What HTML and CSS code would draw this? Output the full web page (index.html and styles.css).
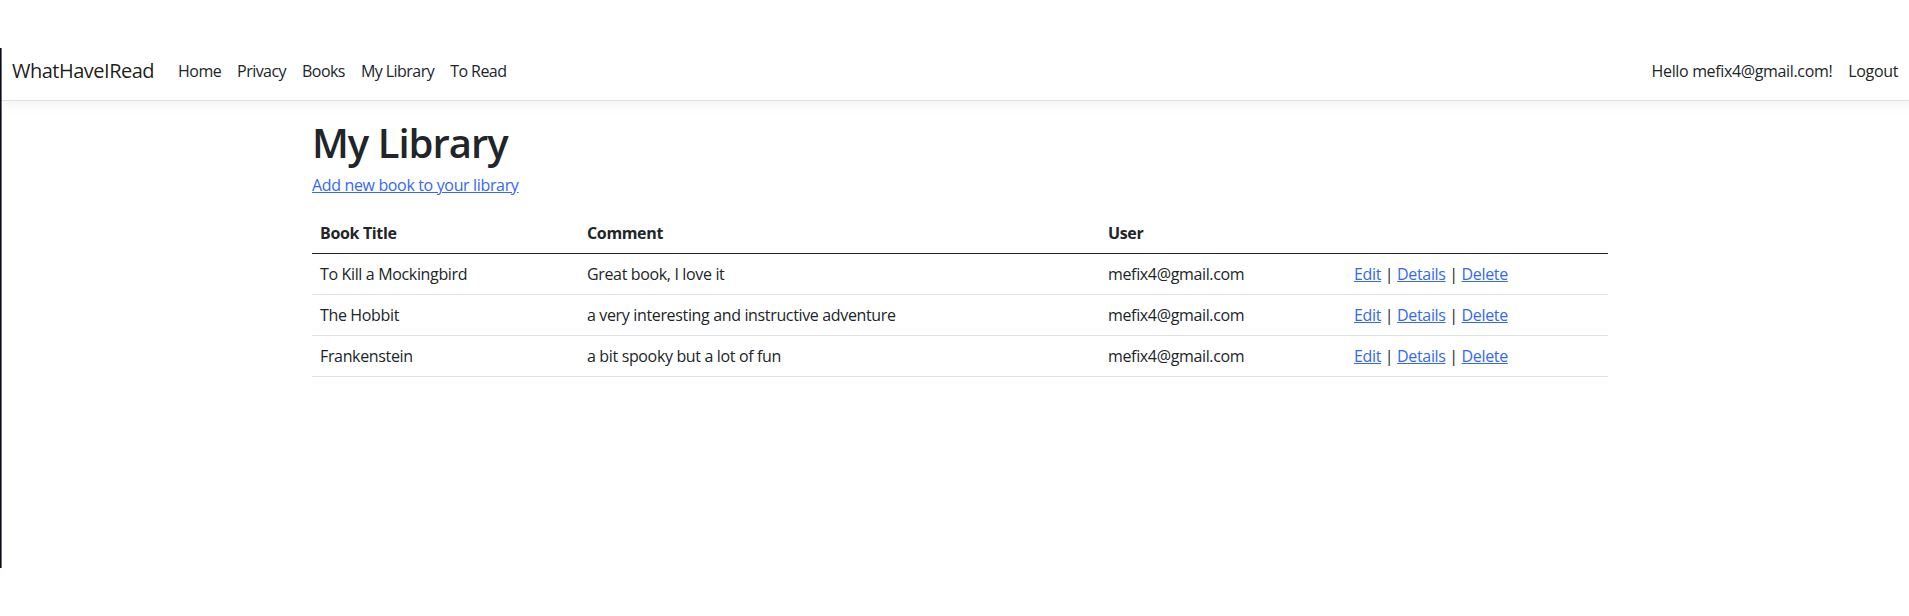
FILE: index.html
```html
<!DOCTYPE html>
<html lang="en">
<head>
<meta charset="utf-8">
<title>My Library - WhatHaveIRead</title>
<link rel="stylesheet" href="styles.css">
</head>
<body>
<div class="frame-edge"></div>
<div class="page">
  <header>
    <nav class="navbar">
      <div class="navbar-inner">
        <a class="brand" href="#">WhatHaveIRead</a>
        <ul class="nav nav-main">
          <li><a class="nav-link" href="#">Home</a></li>
          <li><a class="nav-link" href="#">Privacy</a></li>
          <li><a class="nav-link" href="#">Books</a></li>
          <li><a class="nav-link" href="#">My Library</a></li>
          <li><a class="nav-link" href="#">To Read</a></li>
        </ul>
        <ul class="nav nav-right">
          <li><a class="nav-link" href="#">Hello mefix4@gmail.com!</a></li>
          <li><a class="nav-link" href="#">Logout</a></li>
        </ul>
      </div>
    </nav>
  </header>
  <div class="container">
    <main>
      <h1>My Library</h1>
      <p class="create"><a href="#">Add new book to your library</a></p>
      <table class="table">
        <colgroup>
          <col class="c-title">
          <col class="c-comment">
          <col class="c-user">
          <col class="c-actions">
        </colgroup>
        <thead>
          <tr><th>Book Title</th><th>Comment</th><th>User</th><th></th></tr>
        </thead>
        <tbody>
          <tr>
            <td>To Kill a Mockingbird</td>
            <td>Great book, I love it</td>
            <td>mefix4@gmail.com</td>
            <td><a href="#">Edit</a> | <a href="#">Details</a> | <a href="#">Delete</a></td>
          </tr>
          <tr>
            <td>The Hobbit</td>
            <td>a very interesting and instructive adventure</td>
            <td>mefix4@gmail.com</td>
            <td><a href="#">Edit</a> | <a href="#">Details</a> | <a href="#">Delete</a></td>
          </tr>
          <tr>
            <td>Frankenstein</td>
            <td>a bit spooky but a lot of fun</td>
            <td>mefix4@gmail.com</td>
            <td><a href="#">Edit</a> | <a href="#">Details</a> | <a href="#">Delete</a></td>
          </tr>
        </tbody>
      </table>
    </main>
  </div>
</div>
</body>
</html>
```

FILE: styles.css
```css
html, body {
  margin: 0;
  padding: 0;
  overflow: hidden;
  background: #fff;
}

body {
  font-family: "Open Sans", "Noto Sans", "Liberation Sans", sans-serif;
  font-size: 16px;
  line-height: 1.5;
  letter-spacing: -0.35px;
  color: #212529;
  position: relative;
  height: 616px;
}

.frame-edge {
  position: absolute;
  left: 0;
  top: 48px;
  width: 2px;
  height: 520px;
  background: linear-gradient(to right, #0b0b1c 0, #0b0b1c 1px, #6a6a78 1px, #6a6a78 2px);
  z-index: 5;
}

.page {
  width: 1920px;
  padding-top: 44px;
}

.navbar {
  background: #fff;
  border-bottom: 1px solid #dee2e6;
  box-shadow: 0 6px 12px -2px rgba(0, 0, 0, 0.05);
  padding: 7px 0 9px;
  margin-bottom: 16px;
}

.navbar-inner {
  display: flex;
  align-items: center;
  padding: 0 14px 0 12px;
}

.brand {
  font-size: 20px;
  line-height: 30px;
  letter-spacing: -0.5px;
  padding: 5px 0;
  margin-right: 16px;
  color: rgba(0, 0, 0, 0.9);
  text-decoration: none;
  white-space: nowrap;
}

.nav {
  display: flex;
  list-style: none;
  margin: 0;
  padding: 0;
}

.nav-main {
  letter-spacing: -0.55px;
}

.nav-right {
  margin-left: auto;
}

.nav-link {
  display: block;
  padding: 8px 8px;
  color: #212529;
  text-decoration: none;
  white-space: nowrap;
}

.container {
  width: 1296px;
  margin: 0 auto;
  padding: 0 12px;
}

main {
  padding-bottom: 16px;
}

h1 {
  font-size: 40px;
  font-weight: 600;
  line-height: 1.2;
  letter-spacing: -1px;
  margin: 0 0 6px;
  padding: 2px 0 0;
}

.create {
  margin: 0 0 16px;
}

a {
  color: #3468f5;
}

.table {
  width: 100%;
  border-collapse: collapse;
  margin-bottom: 16px;
  color: #212529;
}

.c-title { width: 267px; }
.c-comment { width: 521px; }
.c-user { width: 246px; }
.c-actions { width: 262px; }

.table th,
.table td {
  padding: 8px;
  text-align: left;
  vertical-align: top;
  border-bottom: 1px solid #dee2e6;
}

.table th {
  font-weight: 700;
  border-bottom: 1px solid #212529;
}
```
